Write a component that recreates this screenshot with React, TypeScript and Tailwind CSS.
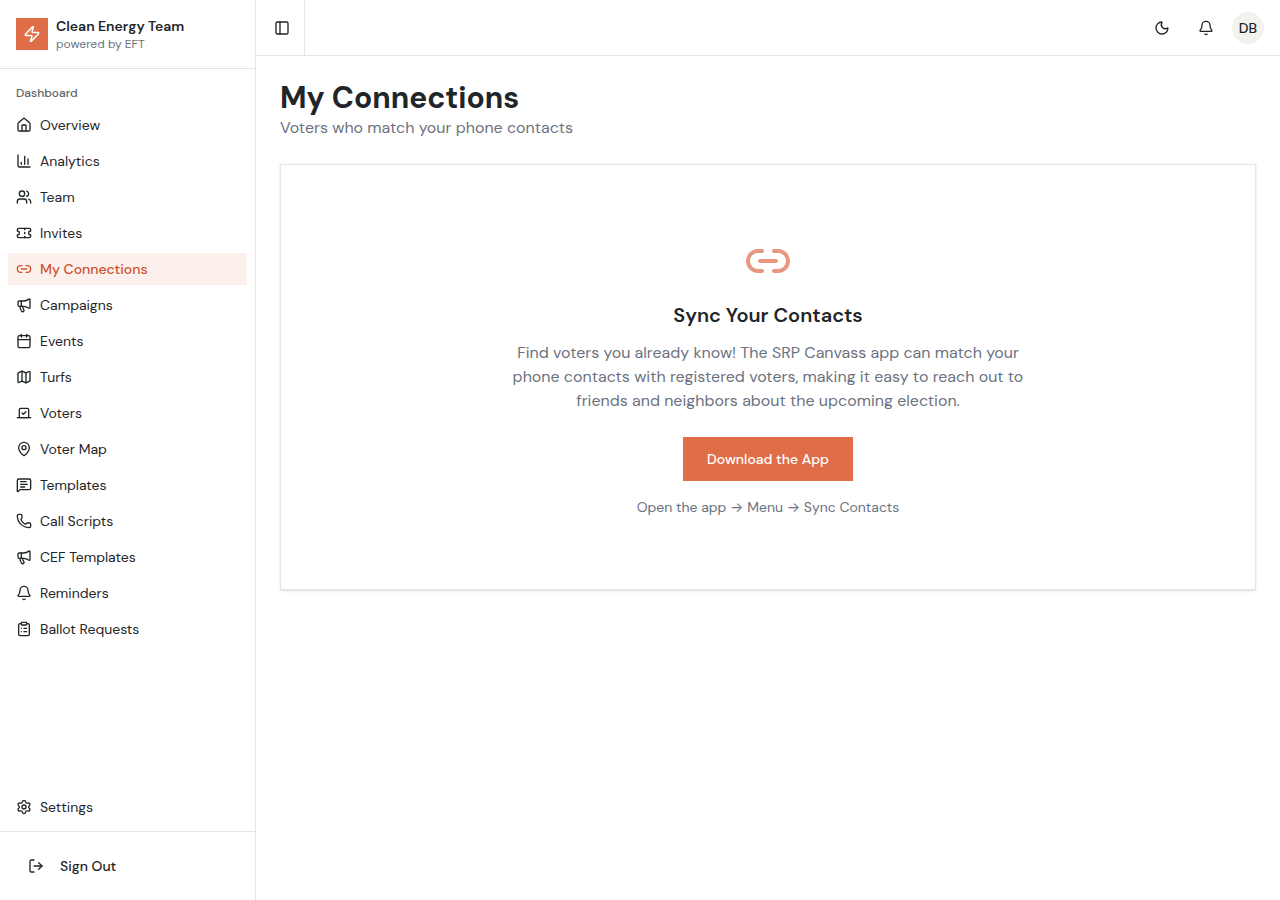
import {
  Bell,
  Calendar,
  ChartColumn,
  ClipboardList,
  House,
  Link2,
  LogOut,
  Map,
  MapPin,
  Megaphone,
  MessageSquareText,
  Moon,
  PanelLeft,
  Phone,
  Settings,
  Ticket,
  Users,
  Vote,
  Zap,
} from 'lucide-react'
import type { LucideIcon } from 'lucide-react'

type NavItem = {
  label: string
  icon: LucideIcon
  active?: boolean
}

const navItems: NavItem[] = [
  { label: 'Overview', icon: House },
  { label: 'Analytics', icon: ChartColumn },
  { label: 'Team', icon: Users },
  { label: 'Invites', icon: Ticket },
  { label: 'My Connections', icon: Link2, active: true },
  { label: 'Campaigns', icon: Megaphone },
  { label: 'Events', icon: Calendar },
  { label: 'Turfs', icon: Map },
  { label: 'Voters', icon: Vote },
  { label: 'Voter Map', icon: MapPin },
  { label: 'Templates', icon: MessageSquareText },
  { label: 'Call Scripts', icon: Phone },
  { label: 'CEF Templates', icon: Megaphone },
  { label: 'Reminders', icon: Bell },
  { label: 'Ballot Requests', icon: ClipboardList },
]

function NavLink({ label, icon: Icon, active }: NavItem) {
  return (
    <a
      href="#"
      aria-current={active ? 'page' : undefined}
      className={
        active
          ? 'flex h-8 items-center gap-2 bg-[#fcf0ec] px-2 text-sm font-medium text-[#d0532f]'
          : 'flex h-8 items-center gap-2 px-2 text-sm hover:bg-[#f5f4f0]'
      }
    >
      <Icon className="size-4 shrink-0" />
      <span className="truncate">{label}</span>
    </a>
  )
}

function Sidebar() {
  return (
    <aside className="flex w-64 shrink-0 flex-col border-r border-[#e5e5e5]">
      <div className="flex items-center gap-2 border-b border-[#e2e3e9] p-4">
        <div className="flex size-8 items-center justify-center bg-[#df6d48] text-white">
          <Zap className="size-[18px]" />
        </div>
        <div>
          <div className="text-sm font-semibold">Clean Energy Team</div>
          <div className="text-xs text-[#6b7280]">powered by EFT</div>
        </div>
      </div>

      <nav className="flex-1 p-2">
        <div className="flex h-8 items-center px-2 text-xs font-medium text-[#626669]">Dashboard</div>
        <ul className="flex flex-col gap-1">
          {navItems.map((item) => (
            <li key={item.label}>
              <NavLink {...item} />
            </li>
          ))}
        </ul>
      </nav>

      <div className="p-2">
        <NavLink label="Settings" icon={Settings} />
      </div>
      <div className="border-t border-[#e5e5e5] p-4">
        <button type="button" className="flex h-9 w-full items-center gap-4 px-3 text-sm font-medium">
          <LogOut className="size-4" />
          Sign Out
        </button>
      </div>
    </aside>
  )
}

function TopBar() {
  return (
    <header className="flex h-14 items-center justify-between border-b border-[#e5e5e5] pr-4">
      <div className="flex h-full items-center border-r border-[#e5e5e5] pr-1 pl-2">
        <button type="button" aria-label="Toggle sidebar" className="flex size-9 items-center justify-center">
          <PanelLeft className="size-4" />
        </button>
      </div>
      <div className="flex items-center gap-2">
        <button type="button" aria-label="Toggle theme" className="flex size-9 items-center justify-center">
          <Moon className="size-4" />
        </button>
        <button type="button" aria-label="Notifications" className="flex size-9 items-center justify-center">
          <Bell className="size-4" />
        </button>
        <button
          type="button"
          className="flex size-8 items-center justify-center rounded-full bg-[#f3f2ee] text-sm font-medium"
        >
          DB
        </button>
      </div>
    </header>
  )
}

function Arrow() {
  return <span className="font-[Inter,sans-serif]">→</span>
}

export default function App() {
  return (
    <div className="flex min-h-screen bg-white font-['DM_Sans',Inter,sans-serif] text-[#1f2528]">
      <Sidebar />
      <div className="min-w-0 flex-1">
        <TopBar />
        <main className="p-6">
          <h1 className="text-3xl font-bold">My Connections</h1>
          <p className="text-[#6b7280]">Voters who match your phone contacts</p>

          <section className="mt-6 flex flex-col items-center border border-[#e5e5e5] px-6 py-18 text-center shadow-sm">
            <Link2 className="size-12 text-[#e99880]" />
            <h2 className="mt-4 text-xl font-semibold">Sync Your Contacts</h2>
            <p className="mt-3 max-w-lg text-[#6b7280]">
              Find voters you already know! The SRP Canvass app can match your phone contacts with
              registered voters, making it easy to reach out to friends and neighbors about the
              upcoming election.
            </p>
            <a
              href="#"
              className="mt-6 flex h-11 items-center bg-[#df6d48] px-6 text-sm font-medium text-white"
            >
              Download the App
            </a>
            <p className="mt-4 text-sm text-[#6b7280]">
              Open the app <Arrow /> Menu <Arrow /> Sync Contacts
            </p>
          </section>
        </main>
      </div>
    </div>
  )
}
